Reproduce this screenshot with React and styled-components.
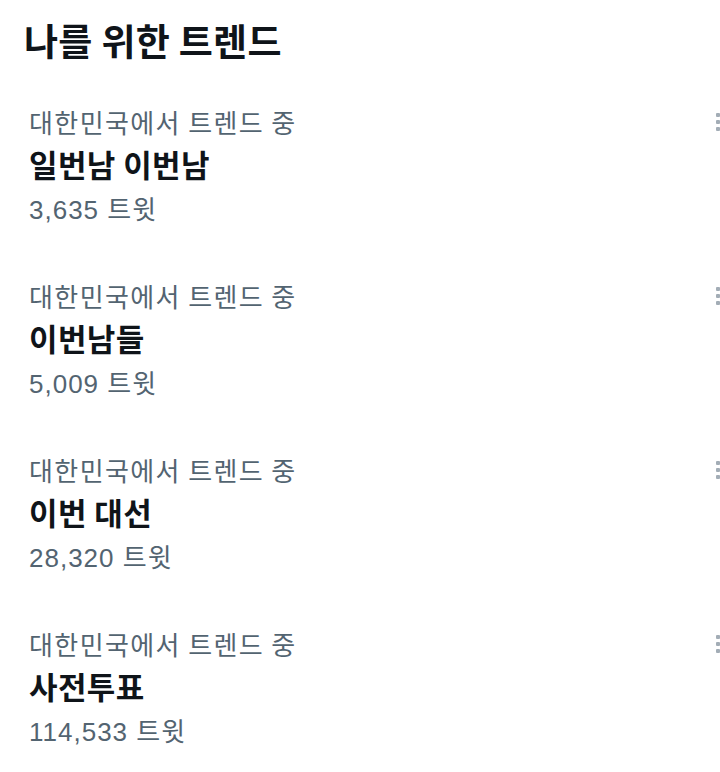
import React from "react";
import styled, { createGlobalStyle } from "styled-components";

const Global = createGlobalStyle`
  html, body { margin: 0; padding: 0; background: #ffffff; }
  body {
    font-family: "Liberation Sans", "Noto Sans CJK KR", sans-serif;
    -webkit-font-smoothing: antialiased;
    overflow: hidden;
  }
`;

const Page = styled.div`
  width: 720px;
  height: 772px;
  box-sizing: border-box;
  padding-top: 15px;
  display: flex;
  flex-direction: column;
  overflow: hidden;
`;

const Title = styled.h2`
  margin: 0 0 40px 0;
  padding-left: 24px;
  font-family: "Noto Sans CJK KR", sans-serif;
  font-size: 37px;
  line-height: 50px;
  font-weight: 700;
  letter-spacing: 0.3px;
  color: #0f1419;
`;

const List = styled.div`
  display: flex;
  flex-direction: column;
  gap: 48px;
`;

const Row = styled.div`
  display: flex;
  justify-content: space-between;
  align-items: flex-start;
  padding-left: 29px;
`;

const Texts = styled.div`
  display: flex;
  flex-direction: column;
`;

const Category = styled.div`
  font-family: "Noto Sans CJK KR", sans-serif;
  font-size: 26px;
  line-height: 34px;
  letter-spacing: 1.4px;
  color: #536471;
  font-weight: 400;
`;

const Name = styled.div`
  font-family: "Noto Sans CJK KR", sans-serif;
  font-size: 31px;
  line-height: 50px;
  letter-spacing: 0.4px;
  font-weight: 700;
  color: #0f1419;
`;

const Count = styled.div`
  font-size: 26px;
  line-height: 42px;
  letter-spacing: 1px;
  color: #536471;
`;

const More = styled.div`
  width: 4px;
  height: 34px;
  display: flex;
  flex-direction: column;
  justify-content: center;
  gap: 3.5px;
`;

const Dot = styled.span`
  display: block;
  width: 4px;
  height: 3.5px;
  background: #a3adb6;
  border-radius: 1px;
`;

const trends = [
  { name: "일번남 이번남", count: "3,635" },
  { name: "이번남들", count: "5,009" },
  { name: "이번 대선", count: "28,320" },
  { name: "사전투표", count: "114,533" },
];

export default function App() {
  return (
    <>
      <Global />
      <Page>
        <Title>나를 위한 트렌드</Title>
        <List>
          {trends.map((t) => (
            <Row key={t.name}>
              <Texts>
                <Category>대한민국에서 트렌드 중</Category>
                <Name>{t.name}</Name>
                <Count>{t.count} 트윗</Count>
              </Texts>
              <More>
                <Dot />
                <Dot />
                <Dot />
              </More>
            </Row>
          ))}
        </List>
      </Page>
    </>
  );
}
